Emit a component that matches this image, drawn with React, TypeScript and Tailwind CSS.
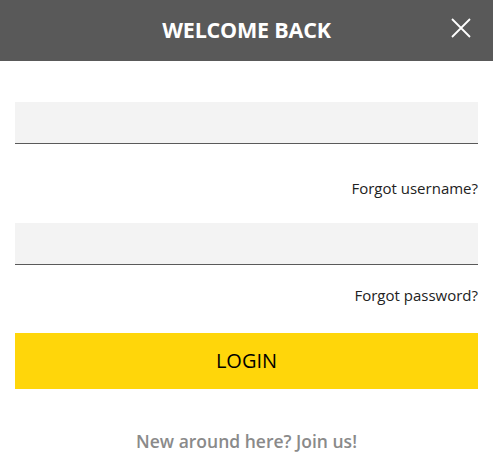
export default function App() {
  return (
    <div className="w-[493px] h-[463px] bg-white font-['Open_Sans',sans-serif]">
      {/* Header */}
      <div className="relative h-[61px] bg-[#595959] flex items-center justify-center">
        <h2 className="text-white font-bold text-[21.5px] tracking-[-0.2px]">WELCOME BACK</h2>
        <button className="absolute right-[22px] top-[18px] text-white">
          <svg width="20" height="20" viewBox="0 0 20 20" fill="none" stroke="currentColor" strokeWidth="1.8">
            <path d="M1 1L19 19M19 1L1 19" />
          </svg>
        </button>
      </div>

      {/* Form */}
      <div className="px-[15px] pt-[41px]">
        <input className="block w-full h-[42px] bg-[#f3f3f3] border-b border-[#5a5a5a] outline-none px-3" />
        <div className="text-right text-[15px] text-[#222] mt-[34px] leading-[20px]">Forgot username?</div>
        <input className="block w-full h-[42px] bg-[#f3f3f3] border-b border-[#5a5a5a] outline-none px-3 mt-[25px]" />
        <div className="text-right text-[15px] text-[#222] mt-[20px] leading-[20px]">Forgot password?</div>
        <button className="block w-full h-[56px] bg-[#ffd60a] text-black text-[20px] mt-[28px]">LOGIN</button>
        <div className="text-center text-[17.5px] font-semibold text-[#8a8a8a] mt-[40px] leading-[24px]">New around here? Join us!</div>
      </div>
    </div>
  );
}
